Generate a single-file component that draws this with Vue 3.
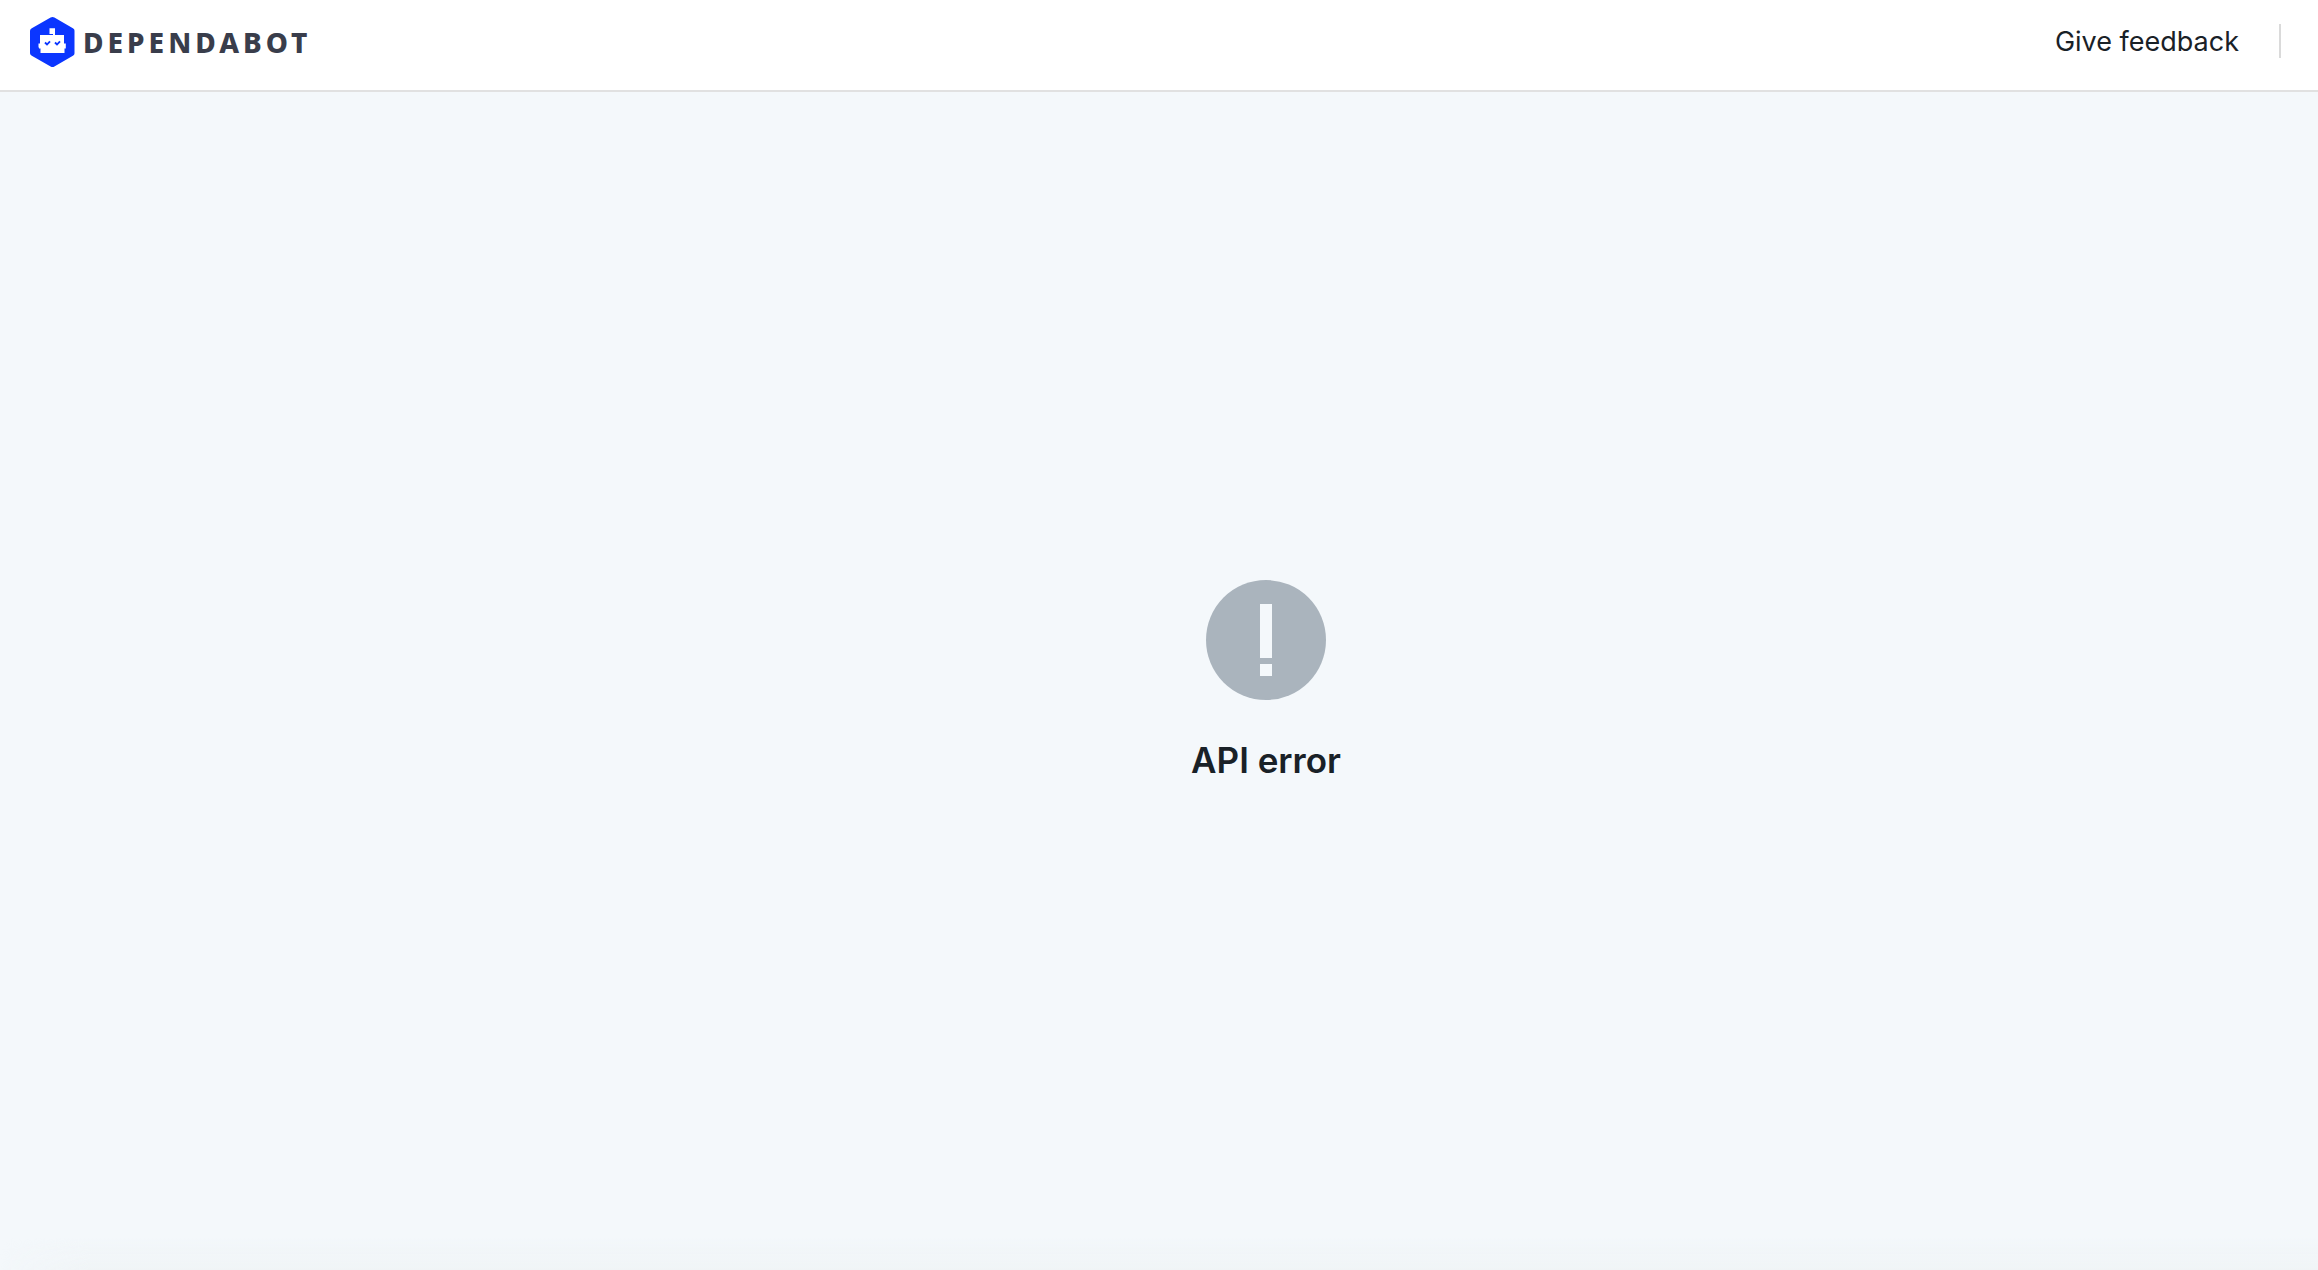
<script setup>
const feedbackUrl = '#feedback'
</script>

<template>
  <div class="page">
    <header class="topbar">
      <a class="brand" href="#home">
        <svg class="brand-mark" viewBox="0 0 45 50" aria-hidden="true">
          <path
            d="M20.600.6a4 4 0 0 1 3.800 0l18.500 10.700a3 3 0 0 1 1.600 3v21.400a3 3 0 0 1-1.600 3L24.400 49.400a4 4 0 0 1-3.800 0L1.800 38.700a3 3 0 0 1-1.800-3V14.300a3 3 0 0 1 1.800-3z"
            fill="#0b36ff"
          />
          <path
            d="M19.500 11.200h5.500V18h9v8.500h1.800V31.500H34.500V36h-24v-4.500H9V30.500H8.500V26.500H10V18h13V17h-3.500z"
            fill="#fff"
          />
          <path
            d="M15 25.500l2 2 3-3.200M25 25.500l2 2 3-3.200"
            fill="none"
            stroke="#0b36ff"
            stroke-width="1.800"
          />
        </svg>
        <span class="brand-name">DEPENDABOT</span>
      </a>
      <nav class="actions">
        <a class="feedback" :href="feedbackUrl">Give feedback</a>
      </nav>
    </header>
    <main class="content">
      <section class="error" role="alert">
        <svg class="error-icon" viewBox="0 0 120 120" aria-hidden="true">
          <circle cx="60" cy="60" r="60" fill="#aab4bd" />
          <path d="M54 24h12v54H54zM54 84h12v12H54z" fill="#f4f8fb" />
        </svg>
        <h1 class="error-title">API error</h1>
      </section>
    </main>
    <div class="shade"></div>
  </div>
</template>

<style>
body {
  margin: 0;
}
</style>

<style scoped>
.page {
  position: relative;
  display: flex;
  flex-direction: column;
  min-height: 100vh;
  background: #f4f8fb;
  color: #192127;
  font-family: Inter, "Liberation Sans", sans-serif;
}

.topbar {
  display: flex;
  align-items: flex-start;
  justify-content: space-between;
  box-sizing: border-box;
  height: 92px;
  padding: 17px 37px 0 30px;
  border-bottom: 2px solid #e1e1e1;
  background: #fff;
}

.brand {
  display: flex;
  align-items: center;
  gap: 8px;
  color: #393d4b;
  text-decoration: none;
}

.brand-mark {
  width: 45px;
  height: 50px;
}

.brand-name {
  font-family: "Noto Sans", sans-serif;
  font-size: 28px;
  font-weight: 800;
  line-height: 50px;
  letter-spacing: 4px;
}

.actions {
  display: flex;
  padding-top: 7px;
}

.feedback {
  padding: 2px 40px 0 0;
  border-right: 2px solid #dadada;
  color: inherit;
  font-size: 27px;
  line-height: 32px;
  text-decoration: none;
}

.content {
  display: flex;
  flex: 1;
  justify-content: center;
  padding: 488px 0 0 214px;
}

.error {
  display: flex;
  flex-direction: column;
  align-items: center;
  gap: 38px;
}

.error-icon {
  width: 120px;
  height: 120px;
}

.error-title {
  margin: 0;
  font-size: 35px;
  font-weight: 600;
  line-height: 44px;
}

.shade {
  position: absolute;
  right: 0;
  bottom: 0;
  left: 0;
  height: 32px;
  background: linear-gradient(to bottom, transparent, #f0f4f6);
  mask-image: linear-gradient(to right, transparent, #000 90px);
}
</style>
